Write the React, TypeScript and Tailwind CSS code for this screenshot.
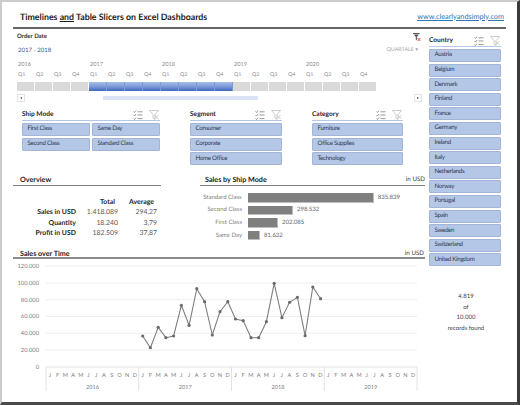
import React from "react";

const font = { fontFamily: '"Lato", "Liberation Sans", sans-serif' };

function MultiIcon() {
  return (
    <svg width="10" height="10" viewBox="0 0 10 10" fill="none" stroke="#7f7f7f" strokeWidth="0.8">
      <path d="M0.5 1.5l1 1 1.6-2M0.5 5l1 1 1.6-2M0.5 8.5l1 1 1.6-2" />
      <path d="M4.5 1.8h5M4.5 5h5M4.5 8.6h5" />
    </svg>
  );
}

function ClearIcon() {
  return (
    <svg width="10" height="10" viewBox="0 0 10 10" fill="none" stroke="#c0c0c0" strokeWidth="0.8">
      <path d="M0.5 0.5h9L6 4.5v5L4 8V4.5z" />
      <path d="M5.5 5l4 4M9.5 5l-4 4" />
    </svg>
  );
}

function Slicer({ title, items, cols = 1, className }: { title: string; items: string[]; cols?: number; className: string }) {
  return (
    <div className={className}>
      <div className="flex items-center h-[12px] border-b border-[#b4c7e7] text-[6.6px] font-bold text-[#262626] leading-none">
        <span className="flex-1">{title}</span>
        <span className="flex gap-[6px] pr-[1px]">
          <MultiIcon />
          <ClearIcon />
        </span>
      </div>
      <div className={cols === 2 ? "grid grid-cols-2 gap-x-[2px] gap-y-[1.6px] mt-[2px]" : "grid grid-cols-1 gap-y-[1.6px] mt-[2px]"}>
        {items.map((t) => (
          <div key={t} className="h-[13px] flex items-center pl-[4.5px] bg-[#b4c7e7] border border-[#a3b5d6] rounded-[1px] text-[6.2px] tracking-[-0.3px] text-[#2f3a52] leading-none whitespace-nowrap">
            {t}
          </div>
        ))}
      </div>
    </div>
  );
}

function SectionHead({ title, right, className }: { title: string; right?: string; className: string }) {
  return (
    <div className={className}>
      <span className="flex-1 text-[7.2px] font-bold text-[#1a1a1a]">{title}</span>
      {right && <span className="text-[6.2px] text-[#404040]">{right}</span>}
    </div>
  );
}

const quarters = ["Q1", "Q2", "Q3", "Q4"];
const years = ["2016", "2017", "2018", "2019", "2020"];

function Timeline() {
  return (
    <div className="pl-[4px]">
      <div className="flex items-center justify-between h-[16px] w-[405px]">
        <span className="text-[6px] font-bold text-[#333] leading-none">Order Date</span>
        <svg width="8" height="9" viewBox="0 0 8 9" className="mr-[1px]">
          <path d="M0 0h6.5v1H0zM0.8 1.6h5L3.9 4v3.4L2.8 6.6V4z" fill="#555" />
          <path d="M4.6 5l2.8 3M7.4 5l-2.8 3" stroke="#e2402a" strokeWidth="0.9" />
        </svg>
      </div>
      <div className="flex items-center justify-between h-[12px] w-[401px]">
        <span className="text-[6px] text-[#2f5597] leading-none pl-[1px]">2017 - 2018</span>
        <span className="text-[5.4px] text-[#a6a6a6] leading-none">QUARTALE ▾</span>
      </div>
      <div className="grid grid-cols-[repeat(5,72px)] w-[361px] h-[13px] mt-[1px] items-center text-[5.6px] text-[#8c8c8c] leading-none">
        {years.map((y) => (
          <span key={y} className="pl-[1px]">{y}</span>
        ))}
      </div>
      <div className="grid grid-cols-[repeat(20,18px)] h-[10px] items-center text-[5.4px] text-[#8c8c8c] leading-none">
        {years.flatMap((y) => quarters.map((q) => (
          <span key={y + q} className="pl-[1px]">{q}</span>
        )))}
      </div>
      <div className="grid grid-cols-[repeat(20,18px)] h-[9px] mt-[1px]">
        {Array.from({ length: 20 }).map((_, i) =>
          i >= 4 && i < 12 ? (
            <div key={i} className="border-r border-[#7d9ad8] bg-gradient-to-b from-[#a9bde8] via-[#7d9ad8] to-[#3f67bd]" />
          ) : (
            <div key={i} className="border-r border-white bg-[#d9d9d9]" />
          )
        )}
      </div>
      <div className="flex items-center h-[8px] mt-[3px] w-[405px]">
        <span className="w-[8px] h-[8px] border border-[#e3e3e3] flex items-center justify-center">
          <span className="border-y-[1.5px] border-r-[2px] border-y-transparent border-r-[#404040]" />
        </span>
        <span className="ml-[78px] w-[155px] h-[3.5px] bg-[#dce3f5]" />
        <span className="ml-auto w-[8px] h-[8px] border border-[#e3e3e3] flex items-center justify-center">
          <span className="border-y-[1.5px] border-l-[2px] border-y-transparent border-l-[#404040]" />
        </span>
      </div>
    </div>
  );
}

const bars = [
  { l: "Standard Class", w: "w-[127px]", v: "835.839" },
  { l: "Second Class", w: "w-[45px]", v: "298.532" },
  { l: "First Class", w: "w-[30px]", v: "202.085" },
  { l: "Same Day", w: "w-[12px]", v: "81.632" },
];

function Bars() {
  return (
    <div className="flex flex-col gap-[3px] pt-[7px] pb-[1px] w-[200px]">
      {bars.map((b) => (
        <div key={b.l} className="flex items-center h-[9.6px] text-[6px] text-[#7f7f7f] leading-none">
          <span className="w-[42px] text-right mr-[5px] whitespace-nowrap">{b.l}</span>
          <span className={`${b.w} h-[9.6px] bg-[#7f7f7f] border-r border-b border-[#bdbdbd] ml-[1px]`} />
          <span className="ml-[4px] text-[#666]">{b.v}</span>
        </div>
      ))}
    </div>
  );
}

const rows = [
  ["Sales in USD", "1.418.089", "294,27"],
  ["Quantity", "18.240", "3,79"],
  ["Profit in USD", "182.509", "37,87"],
];

function Overview() {
  return (
    <div className="grid grid-cols-[63px_42px_39px] pt-[11px] text-[6.9px] leading-[10.3px] w-[148px]">
      <span />
      <span className="text-right font-bold text-[#262626] pr-[3px]">Total</span>
      <span className="text-right font-bold text-[#262626] pr-[3px]">Average</span>
      {rows.map((r) => (
        <React.Fragment key={r[0]}>
          <span className="text-right font-bold text-[#262626] whitespace-nowrap">{r[0]}</span>
          <span className="text-right text-[#595959]">{r[1]}</span>
          <span className="text-right text-[#595959]">{r[2]}</span>
        </React.Fragment>
      ))}
    </div>
  );
}

const pts: [number, number][] = [
  [142.7, 336], [150.4, 347.7], [158.2, 327.3], [165.9, 337.7], [173.6, 336], [181.4, 305.3], [189.1, 325.3], [196.8, 288.7], [204.6, 301.7], [212.3, 335], [220, 311.7], [227.8, 301.7],
  [235.5, 319], [243.2, 320.7], [251, 337.7], [258.7, 337.7], [266.4, 321.7], [274.2, 283.3], [281.9, 317.7], [289.6, 302.3], [297.4, 297.3], [305.1, 335.7], [312.8, 287], [320.6, 298.7],
];
const yTicks = [["120.000", 266], ["100.000", 283], ["80.000", 299.7], ["60.000", 316.4], ["40.000", 333.2], ["20.000", 350]] as const;
const months = "JFMAMJJASOND".split("");

function Chart() {
  const oy = 259;
  const ox = 13;
  return (
    <svg width="412" height="135" viewBox={`${ox} ${oy} 412 135`} style={font} className="block">
      {yTicks.map(([t, y]) => (
        <g key={t}>
          <line x1="46" x2="417" y1={y} y2={y} stroke="#eeeeee" strokeWidth="1" />
          <text x="39" y={y + 2} textAnchor="end" fontSize="5.8" fill="#7f7f7f">{t}</text>
        </g>
      ))}
      <text x="39" y="369" textAnchor="end" fontSize="5.8" fill="#7f7f7f">0</text>
      <line x1="46" x2="417" y1="367" y2="367" stroke="#e2e2e2" />
      {[46, 138.75, 231.5, 324.25, 417].map((x) => (
        <line key={x} x1={x} x2={x} y1="367" y2="391" stroke="#e2e2e2" />
      ))}
      {Array.from({ length: 48 }).map((_, i) => (
        <text key={i} x={46 + (i + 0.5) * 7.73} y="377" textAnchor="middle" fontSize="5.6" fill="#7f7f7f">{months[i % 12]}</text>
      ))}
      {["2016", "2017", "2018", "2019"].map((y, i) => (
        <text key={y} x={92.4 + i * 92.75} y="389" textAnchor="middle" fontSize="5.6" fill="#7f7f7f">{y}</text>
      ))}
      <polyline points={pts.map((p) => p.join(",")).join(" ")} fill="none" stroke="#7f7f7f" strokeWidth="1.1" />
      {pts.map((p, i) => (
        <circle key={i} cx={p[0]} cy={p[1]} r="1.6" fill="#6b6b6b" />
      ))}
    </svg>
  );
}

const countries = ["Austria", "Belgium", "Denmark", "Finland", "France", "Germany", "Ireland", "Italy", "Netherlands", "Norway", "Portugal", "Spain", "Sweden", "Switzerland", "United Kingdom"];

export default function App() {
  return (
    <div style={font} className="[text-rendering:geometricPrecision] w-[520px] h-[405px] bg-white border-l-2 border-t-2 border-[#cccccc] border-r-[3px] border-b-[3px] border-r-[#3a3a3a] border-b-[#4a4a4a] overflow-hidden">
      <div className="ml-[11px] w-[493px] h-[27px] border-b-2 border-[#666666] flex items-center justify-between pl-[7px] pr-[2px] pt-[5px]">
        <span className="text-[8.8px] font-bold text-[#1a1a1a]">
          Timelines <span className="underline">and</span> Table Slicers on Excel Dashboards
        </span>
        <span className="text-[7.3px] text-[#2e75b6] underline">www.clearlyandsimply.com</span>
      </div>
      <div className="flex ml-[11px]">
        <div className="w-[412px]">
          <Timeline />
          <div className="flex mt-[7px] h-[59px]">
            <Slicer className="ml-[9px] w-[138px]" title="Ship Mode" cols={2} items={["First Class", "Same Day", "Second Class", "Standard Class"]} />
            <Slicer className="ml-[30px] w-[92px]" title="Segment" items={["Consumer", "Corporate", "Home Office"]} />
            <Slicer className="ml-[30px] w-[91px]" title="Category" items={["Furniture", "Office Supplies", "Technology"]} />
          </div>
          <div className="flex mt-[5px]">
            <div className="w-[148px]">
              <SectionHead className="flex items-end h-[13px] pl-[7px] border-b border-[#7f7f7f] leading-[10px]" title="Overview" />
              <Overview />
            </div>
            <div className="ml-[39px] w-[225px]">
              <SectionHead className="flex items-end h-[13px] pl-[5px] border-b border-[#7f7f7f] leading-[10px]" title="Sales by Ship Mode" right="in USD" />
              <Bars />
            </div>
          </div>
          <SectionHead className="flex items-end h-[13px] mt-[4.6px] pl-[7px] pr-[1px] border-b-2 border-[#8c8c8c] leading-[6px]" title="Sales over Time" right="in USD" />
          <Chart />
        </div>
        <div className="ml-[4px] w-[72px] pt-[6px]">
          <Slicer className="w-[72px]" title="Country" items={countries} />
          <div className="mt-[26px] w-[74px] flex flex-col items-center text-[6px] leading-[10.4px] text-[#404040]">
            <span>4.819</span>
            <span>of</span>
            <span>10.000</span>
            <span>records found</span>
          </div>
        </div>
      </div>
    </div>
  );
}
